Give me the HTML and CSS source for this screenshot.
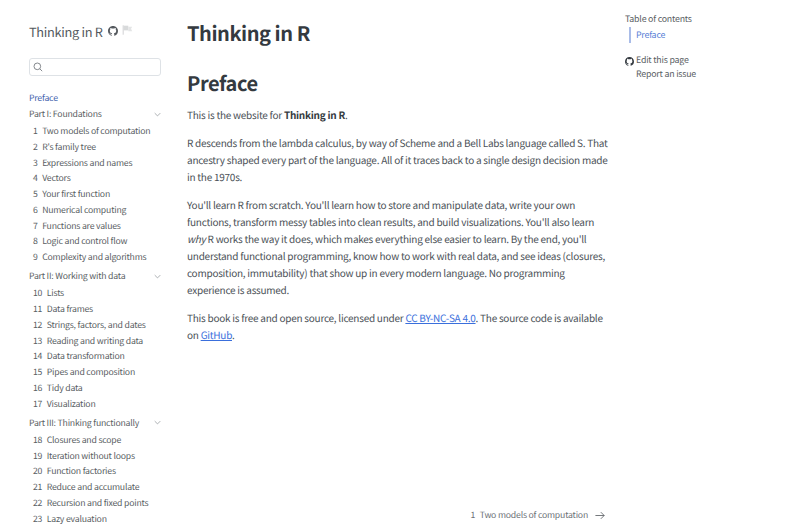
FILE: index.html
```html
<!DOCTYPE html>
<html lang="en">
<head>
    <meta charset="UTF-8">
    <title>Thinking in R</title>
    <link rel="stylesheet" href="styles.css">
</head>
<body>
    <div class="layout">
        <nav class="sidebar">
            <div class="brand">
                <span class="brand-title">Thinking in R</span>
                <svg class="gh-icon" viewBox="0 0 16 16"><path d="M8 0C3.58 0 0 3.58 0 8c0 3.54 2.29 6.53 5.47 7.59.4.07.55-.17.55-.38v-1.34c-2.23.49-2.7-1.07-2.7-1.07-.36-.92-.89-1.17-.89-1.17-.73-.5.05-.49.05-.49.81.06 1.23.83 1.23.83.72 1.22 1.87.87 2.33.66.07-.52.28-.87.51-1.07-1.78-.2-3.64-.89-3.64-3.95 0-.87.31-1.59.82-2.15-.08-.2-.36-1.02.08-2.12 0 0 .67-.21 2.2.82a7.6 7.6 0 0 1 4 0c1.53-1.04 2.2-.82 2.2-.82.44 1.1.16 1.92.08 2.12.51.56.82 1.27.82 2.15 0 3.07-1.87 3.75-3.65 3.95.29.25.54.73.54 1.48v2.2c0 .21.15.46.55.38A8 8 0 0 0 16 8c0-4.42-3.58-8-8-8z"/></svg>
                <svg class="flag-icon" viewBox="0 0 14 14"><path d="M1.500 1v12" stroke="#c4c6c8" fill="none"/><path d="M2 1.500h6v6H2z" fill="#d8dadb"/><path d="M8 3h5l-1.500 2.500L13 8.500H8z" fill="#e4e5e6"/></svg>
            </div>
            <div class="search">
                <svg class="search-icon" viewBox="0 0 12 12"><circle cx="5.200" cy="5.200" r="4"/><path d="M8.200 8.200 11 11"/></svg>
            </div>
            <a class="nav-top" href="#">Preface</a>
            <div class="part"><span>Part I: Foundations</span><svg class="chev" viewBox="0 0 10 6"><path d="M1 1l4 4 4-4"/></svg></div>
            <ul class="chapters">
                <li><span class="num">1</span>Two models of computation</li>
                <li><span class="num">2</span>R's family tree</li>
                <li><span class="num">3</span>Expressions and names</li>
                <li><span class="num">4</span>Vectors</li>
                <li><span class="num">5</span>Your first function</li>
                <li><span class="num">6</span>Numerical computing</li>
                <li><span class="num">7</span>Functions are values</li>
                <li><span class="num">8</span>Logic and control flow</li>
                <li><span class="num">9</span>Complexity and algorithms</li>
            </ul>
            <div class="part"><span>Part II: Working with data</span><svg class="chev" viewBox="0 0 10 6"><path d="M1 1l4 4 4-4"/></svg></div>
            <ul class="chapters">
                <li><span class="num">10</span>Lists</li>
                <li><span class="num">11</span>Data frames</li>
                <li><span class="num">12</span>Strings, factors, and dates</li>
                <li><span class="num">13</span>Reading and writing data</li>
                <li><span class="num">14</span>Data transformation</li>
                <li><span class="num">15</span>Pipes and composition</li>
                <li><span class="num">16</span>Tidy data</li>
                <li><span class="num">17</span>Visualization</li>
            </ul>
            <div class="part"><span>Part III: Thinking functionally</span><svg class="chev" viewBox="0 0 10 6"><path d="M1 1l4 4 4-4"/></svg></div>
            <ul class="chapters">
                <li><span class="num">18</span>Closures and scope</li>
                <li><span class="num">19</span>Iteration without loops</li>
                <li><span class="num">20</span>Function factories</li>
                <li><span class="num">21</span>Reduce and accumulate</li>
                <li><span class="num">22</span>Recursion and fixed points</li>
                <li><span class="num">23</span>Lazy evaluation</li>
            </ul>
        </nav>

        <main class="content">
            <h1>Thinking in R</h1>
            <h2>Preface</h2>
            <p>This is the website for <strong>Thinking in R</strong>.</p>
            <p>R descends from the lambda calculus, by way of Scheme and a Bell Labs language called S. That ancestry shaped every part of the language. All of it traces back to a single design decision made in the 1970s.</p>
            <p>You'll learn R from scratch. You'll learn how to store and manipulate data, write your own functions, transform messy tables into clean results, and build visualizations. You'll also learn <em>why</em> R works the way it does, which makes everything else easier to learn. By the end, you'll understand functional programming, know how to work with real data, and see ideas (closures, composition, immutability) that show up in every modern language. No programming experience is assumed.</p>
            <p>This book is free and open source, licensed under <a href="#">CC BY-NC-SA 4.0</a>. The source code is available on <a href="#">GitHub</a>.</p>
            <div class="next">
                <span class="next-num">1</span><span>Two models of computation</span>
                <svg class="arrow" viewBox="0 0 12 10"><path d="M.5 5h10.500M7 1l4 4-4 4"/></svg>
            </div>
        </main>

        <aside class="toc">
            <div class="toc-title">Table of contents</div>
            <a class="toc-link" href="#">Preface</a>
            <div class="toc-actions">
                <svg class="toc-gh" viewBox="0 0 16 16"><path d="M8 0C3.58 0 0 3.58 0 8c0 3.54 2.29 6.53 5.47 7.59.4.07.55-.17.55-.38v-1.34c-2.23.49-2.7-1.07-2.7-1.07-.36-.92-.89-1.17-.89-1.17-.73-.5.05-.49.05-.49.81.06 1.23.83 1.23.83.72 1.22 1.87.87 2.33.66.07-.52.28-.87.51-1.07-1.78-.2-3.64-.89-3.64-3.95 0-.87.31-1.59.82-2.15-.08-.2-.36-1.02.08-2.12 0 0 .67-.21 2.2.82a7.6 7.6 0 0 1 4 0c1.53-1.04 2.2-.82 2.2-.82.44 1.1.16 1.92.08 2.12.51.56.82 1.27.82 2.15 0 3.07-1.87 3.75-3.65 3.95.29.25.54.73.54 1.48v2.2c0 .21.15.46.55.38A8 8 0 0 0 16 8c0-4.42-3.58-8-8-8z"/></svg>
                <div class="toc-action-links">
                    <div>Edit this page</div>
                    <div>Report an issue</div>
                </div>
            </div>
        </aside>
    </div>
</body>
</html>
```

FILE: styles.css
```css
* {
    box-sizing: border-box;
}
html, body {
    margin: 0;
    padding: 0;
    height: 100%;
    overflow: hidden;
    background: #fff;
    color: #343a40;
    font-family: "Noto Sans CJK KR", "Noto Sans CJK SC", sans-serif;
    text-rendering: geometricPrecision;
}
a {
    text-decoration: none;
}

.layout {
    display: grid;
    grid-template-columns: 187px 424px 185px;
    height: 530px;
    overflow: hidden;
}

/* left nav */
.sidebar {
    padding: 21px 0 0 29px;
    height: 530px;
    overflow: hidden;
    color: #595e63;
    font-size: 8.700px;
    letter-spacing: -.2px;
}
.brand {
    display: flex;
    align-items: center;
    height: 20px;
}
.brand-title {
    font-size: 12.800px;
    letter-spacing: -.3px;
    color: #545a60;
}
.gh-icon {
    width: 10px;
    height: 10px;
    margin-left: 5px;
    fill: #55595e;
}
.flag-icon {
    width: 11px;
    height: 12px;
    margin: -3px 0 0 4px;
}
.search {
    display: flex;
    align-items: center;
    width: 132px;
    height: 18.500px;
    margin-top: 16.500px;
    padding-left: 3px;
    border: 1px solid #dee2e6;
    border-radius: 3px;
}
.search-icon {
    width: 10px;
    height: 10px;
    fill: none;
    stroke: #6c7177;
    stroke-width: 1;
}
.nav-top {
    display: block;
    margin-top: 14px;
    line-height: 16px;
    color: #3f63ad;
}
.part {
    display: flex;
    justify-content: space-between;
    align-items: center;
    width: 132px;
    line-height: 16px;
    white-space: nowrap;
}
.chev {
    width: 7px;
    height: 5px;
    fill: none;
    stroke: #8a8f94;
    stroke-width: 1;
}
.chapters {
    list-style: none;
    margin: 1px 0 3.500px;
    padding: 0;
}
.chapters li {
    height: 15.750px;
    line-height: 15.750px;
    padding-left: 4px;
    white-space: nowrap;
}
.num {
    margin-right: 4.500px;
}

/* main column */
.content {
    position: relative;
    height: 530px;
    font-size: 10px;
    letter-spacing: -.25px;
    line-height: 16.900px;
    color: #4b5157;
}
h1, h2 {
    margin: 0;
    color: #343a40;
    font-weight: 700;
    line-height: 24px;
    font-size: 20px;
    letter-spacing: -.45px;
}
h1 {
    margin-top: 21px;
}
h2 {
    margin-top: 25.500px;
}
p {
    margin: 11.400px 0 0;
}
h2 + p {
    margin-top: 12.500px;
}
strong {
    color: #343a40;
}
.content a {
    color: #3a6fdc;
    text-decoration: underline;
}
/* pinned to the bottom of the page */
.next {
    position: absolute;
    right: 6px;
    top: 507px;
    display: flex;
    align-items: center;
    font-size: 8.700px;
    letter-spacing: -.2px;
    line-height: 16px;
    color: #6c7177;
}
.next-num {
    margin-right: 4.500px;
}
.arrow {
    width: 10px;
    height: 9px;
    margin-left: 7px;
    fill: none;
    stroke: #595e63;
    stroke-width: 1;
}

/* right toc */
.toc {
    padding: 11px 0 0 14px;
    font-size: 8.800px;
    letter-spacing: -.2px;
    color: #595e63;
}
.toc-title {
    line-height: 16px;
}
.toc-link {
    display: block;
    margin: 0 0 0 4px;
    padding-left: 5px;
    border-left: 2px solid #a9bce8;
    line-height: 16px;
    color: #5a7fd6;
}
.toc-actions {
    display: flex;
    margin-top: 10px;
}
.toc-gh {
    width: 9px;
    height: 9px;
    margin-top: 3.500px;
    fill: #343a40;
    flex: none;
}
.toc-action-links {
    margin-left: 2px;
    line-height: 14px;
}
```
